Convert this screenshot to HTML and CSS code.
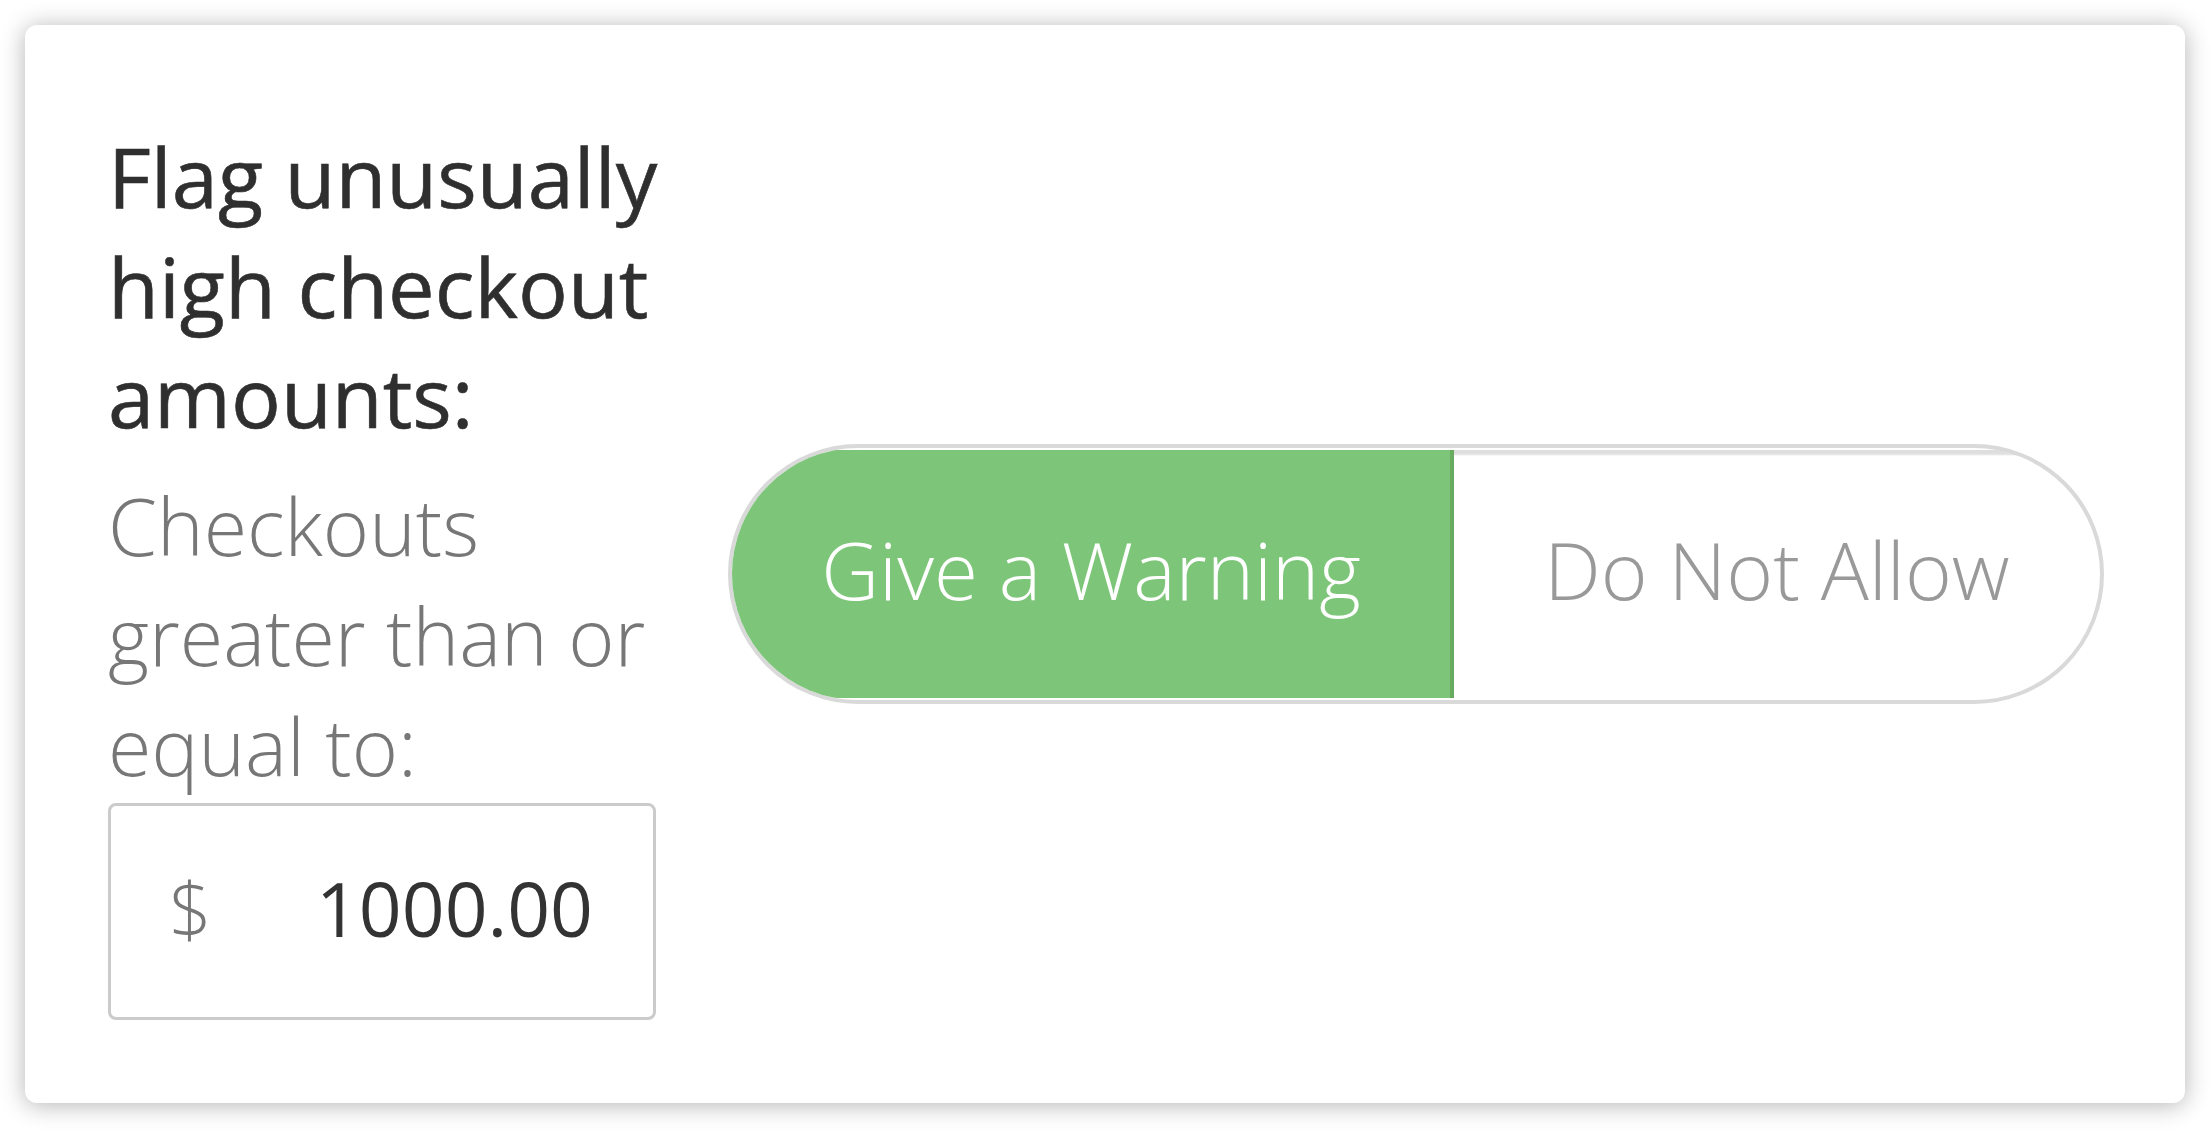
FILE: index.html
```html
<!DOCTYPE html>
<html lang="en">
<head>
    <meta charset="UTF-8">
    <meta name="viewport" content="width=device-width, initial-scale=1.0">
    <title>Checkout Limits</title>
    <link rel="stylesheet" href="styles.css">
</head>
<body>

    <!-- Rule card -->
    <div class="rule-card">
        <div class="rule-info">
            <h2 class="rule-title">Flag unusually high checkout amounts:</h2>
            <p class="rule-desc">Checkouts greater than or equal to:</p>
            <div class="amount-field">
                <span class="amount-currency">$</span>
                <span class="amount-value">1000.00</span>
            </div>
        </div>

        <!-- Action switch -->
        <div class="action-toggle">
            <div class="toggle-option is-active">Give a Warning</div>
            <div class="toggle-option">Do Not Allow</div>
        </div>
    </div>

</body>
</html>
```

FILE: styles.css
```css
/* Basic Body Styles */
body {
    font-family: 'Open Sans', 'Liberation Sans', sans-serif;
    background: #ffffff;
    margin: 0;
    padding: 25px 26px 28px 25px;
    box-sizing: border-box;
}

/* Card */
.rule-card {
    display: flex;
    align-items: center;
    background: #ffffff;
    border-radius: 12px;
    box-shadow: 0 2px 24px rgba(0, 0, 0, 0.3);
    padding: 96px 81px 83px 83px;
}

/* Left column */
.rule-info {
    width: 600px;
    flex-shrink: 0;
}

.rule-title {
    margin: 0;
    font-size: 83px;
    line-height: 110px;
    font-weight: 500;
    color: #2f2f2f;
    -webkit-text-stroke: 0.6px #2f2f2f;
}

.rule-desc {
    margin: 20px 0 2px 0;
    font-size: 79px;
    line-height: 110px;
    font-weight: 300;
    color: #777777;
}

.amount-field {
    width: 548px;
    height: 217px;
    box-sizing: border-box;
    border: 3px solid #cbcbcb;
    border-radius: 8px;
    display: flex;
    align-items: center;
    justify-content: space-between;
    padding: 0 60px 8px 58px;
    font-size: 75px;
}

.amount-currency {
    color: #777777;
    font-weight: 300;
}

.amount-value {
    color: #333333;
}

/* Pill switch */
.action-toggle {
    flex: 1;
    margin-left: 20px;
    margin-top: 6px;
    height: 260px;
    box-sizing: border-box;
    display: flex;
    border: 4px solid #d9d9d9;
    border-radius: 130px;
    padding: 2px 0;
    overflow: hidden;
}

.toggle-option {
    display: flex;
    align-items: center;
    justify-content: center;
    padding-bottom: 10px;
    font-size: 80px;
    font-weight: 300;
    color: #999999;
    flex: 1;
    box-shadow: inset 0 6px 2px -1px rgba(0, 0, 0, 0.13);
}

.toggle-option.is-active {
    flex: 0 0 722px;
    box-sizing: border-box;
    background: #7dc579;
    border-right: 4px solid #6aab62;
    color: #ffffff;
    box-shadow: none;
}
```
